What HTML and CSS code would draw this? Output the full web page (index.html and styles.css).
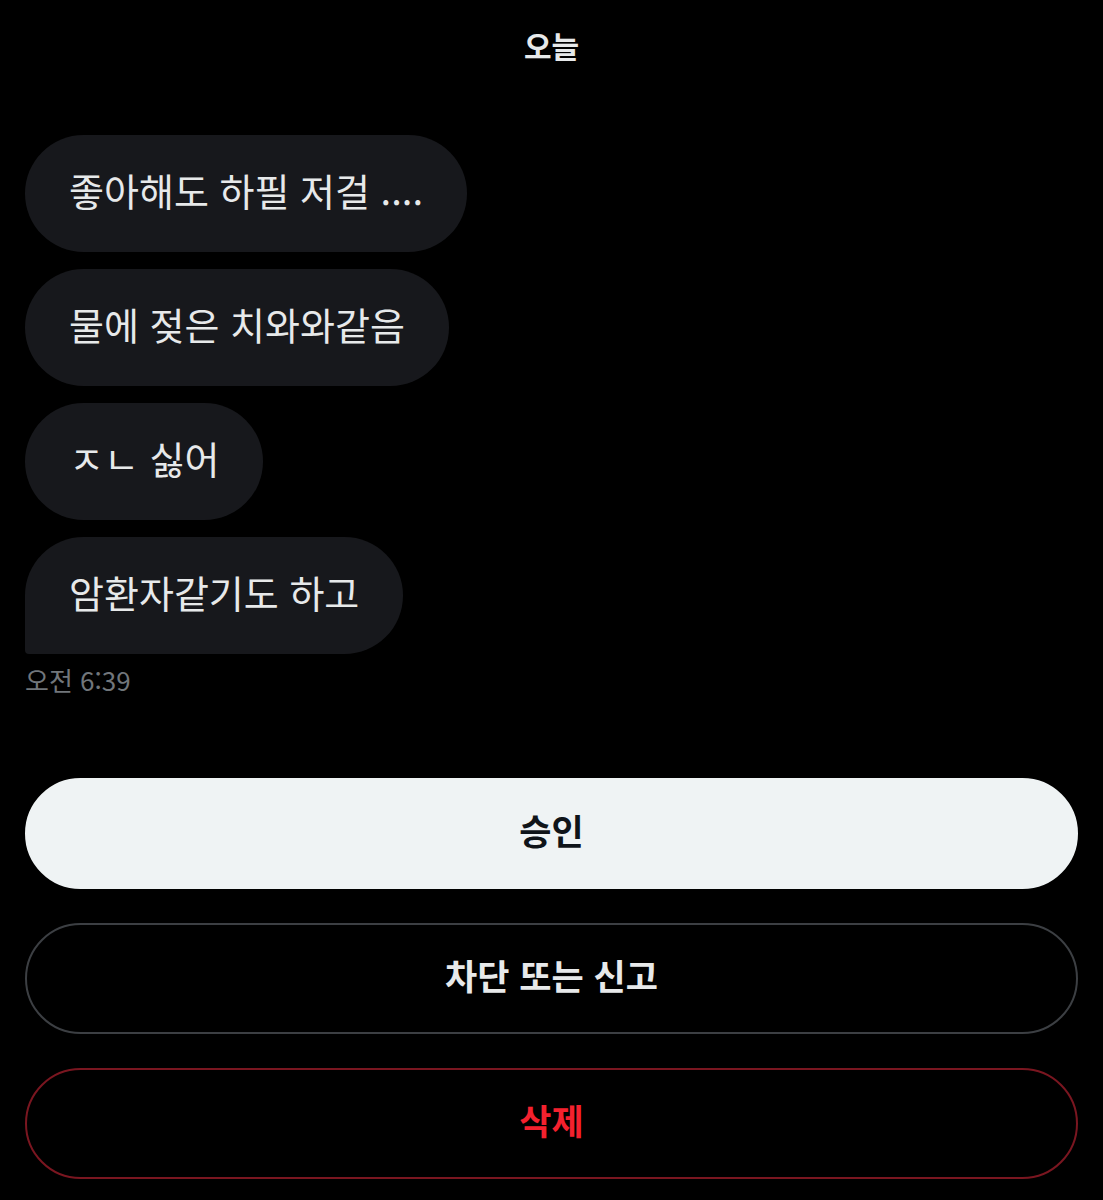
FILE: index.html
```html
<!DOCTYPE html>
<html lang="ko">
<head>
  <meta charset="UTF-8" />
  <meta name="viewport" content="width=device-width, initial-scale=1.0"/>
  <title>메시지 요청</title>
  <link rel="stylesheet" href="styles.css">
</head>
<body>
<div class="container">
  <div class="day">오늘</div>

  <div class="messages">
    <div class="bubble">좋아해도 하필 저걸 ....</div>
    <div class="bubble">물에 젖은 치와와같음</div>
    <div class="bubble">ㅈㄴ 싫어</div>
    <div class="bubble last">암환자같기도 하고</div>
  </div>
  <div class="time">오전 6:39</div>

  <div class="actions">
    <button class="btn accept">승인</button>
    <button class="btn block">차단 또는 신고</button>
    <button class="btn delete">삭제</button>
  </div>
</div>
</body>
</html>
```

FILE: styles.css
```css
html, body {
  margin: 0;
  padding: 0;
  background: #000;
  color: #e7e9ea;
  font-family: "Noto Sans CJK KR", "Noto Sans", sans-serif;
}

.container {
  padding: 0 25px;
}

.day {
  padding-top: 24px;
  line-height: 42px;
  font-size: 30px;
  font-weight: 700;
  text-align: center;
}

.messages {
  margin-top: 69px;
  display: flex;
  flex-direction: column;
  align-items: flex-start;
  gap: 17px;
}

.bubble {
  background: #17181c;
  border-radius: 59px;
  padding: 30px 44px 38px 44px;
  font-size: 38px;
  line-height: 49px;
}

.bubble.last {
  border-bottom-left-radius: 4px;
}

.time {
  margin-top: 10px;
  font-size: 26px;
  line-height: 32px;
  color: #71767b;
}

.actions {
  margin-top: 82px;
  display: flex;
  flex-direction: column;
  gap: 34px;
}

.btn {
  height: 111px;
  padding: 0 0 8px;
  border-radius: 56px;
  font-family: inherit;
  font-size: 35px;
  font-weight: 700;
  background: transparent;
  border: 2px solid #3c3f43;
  color: #e7e9ea;
}

.btn.accept {
  background: #eff3f4;
  border-color: #eff3f4;
  color: #0f1419;
}

.btn.delete {
  border-color: #7a1620;
  color: #f4212e;
}
```
